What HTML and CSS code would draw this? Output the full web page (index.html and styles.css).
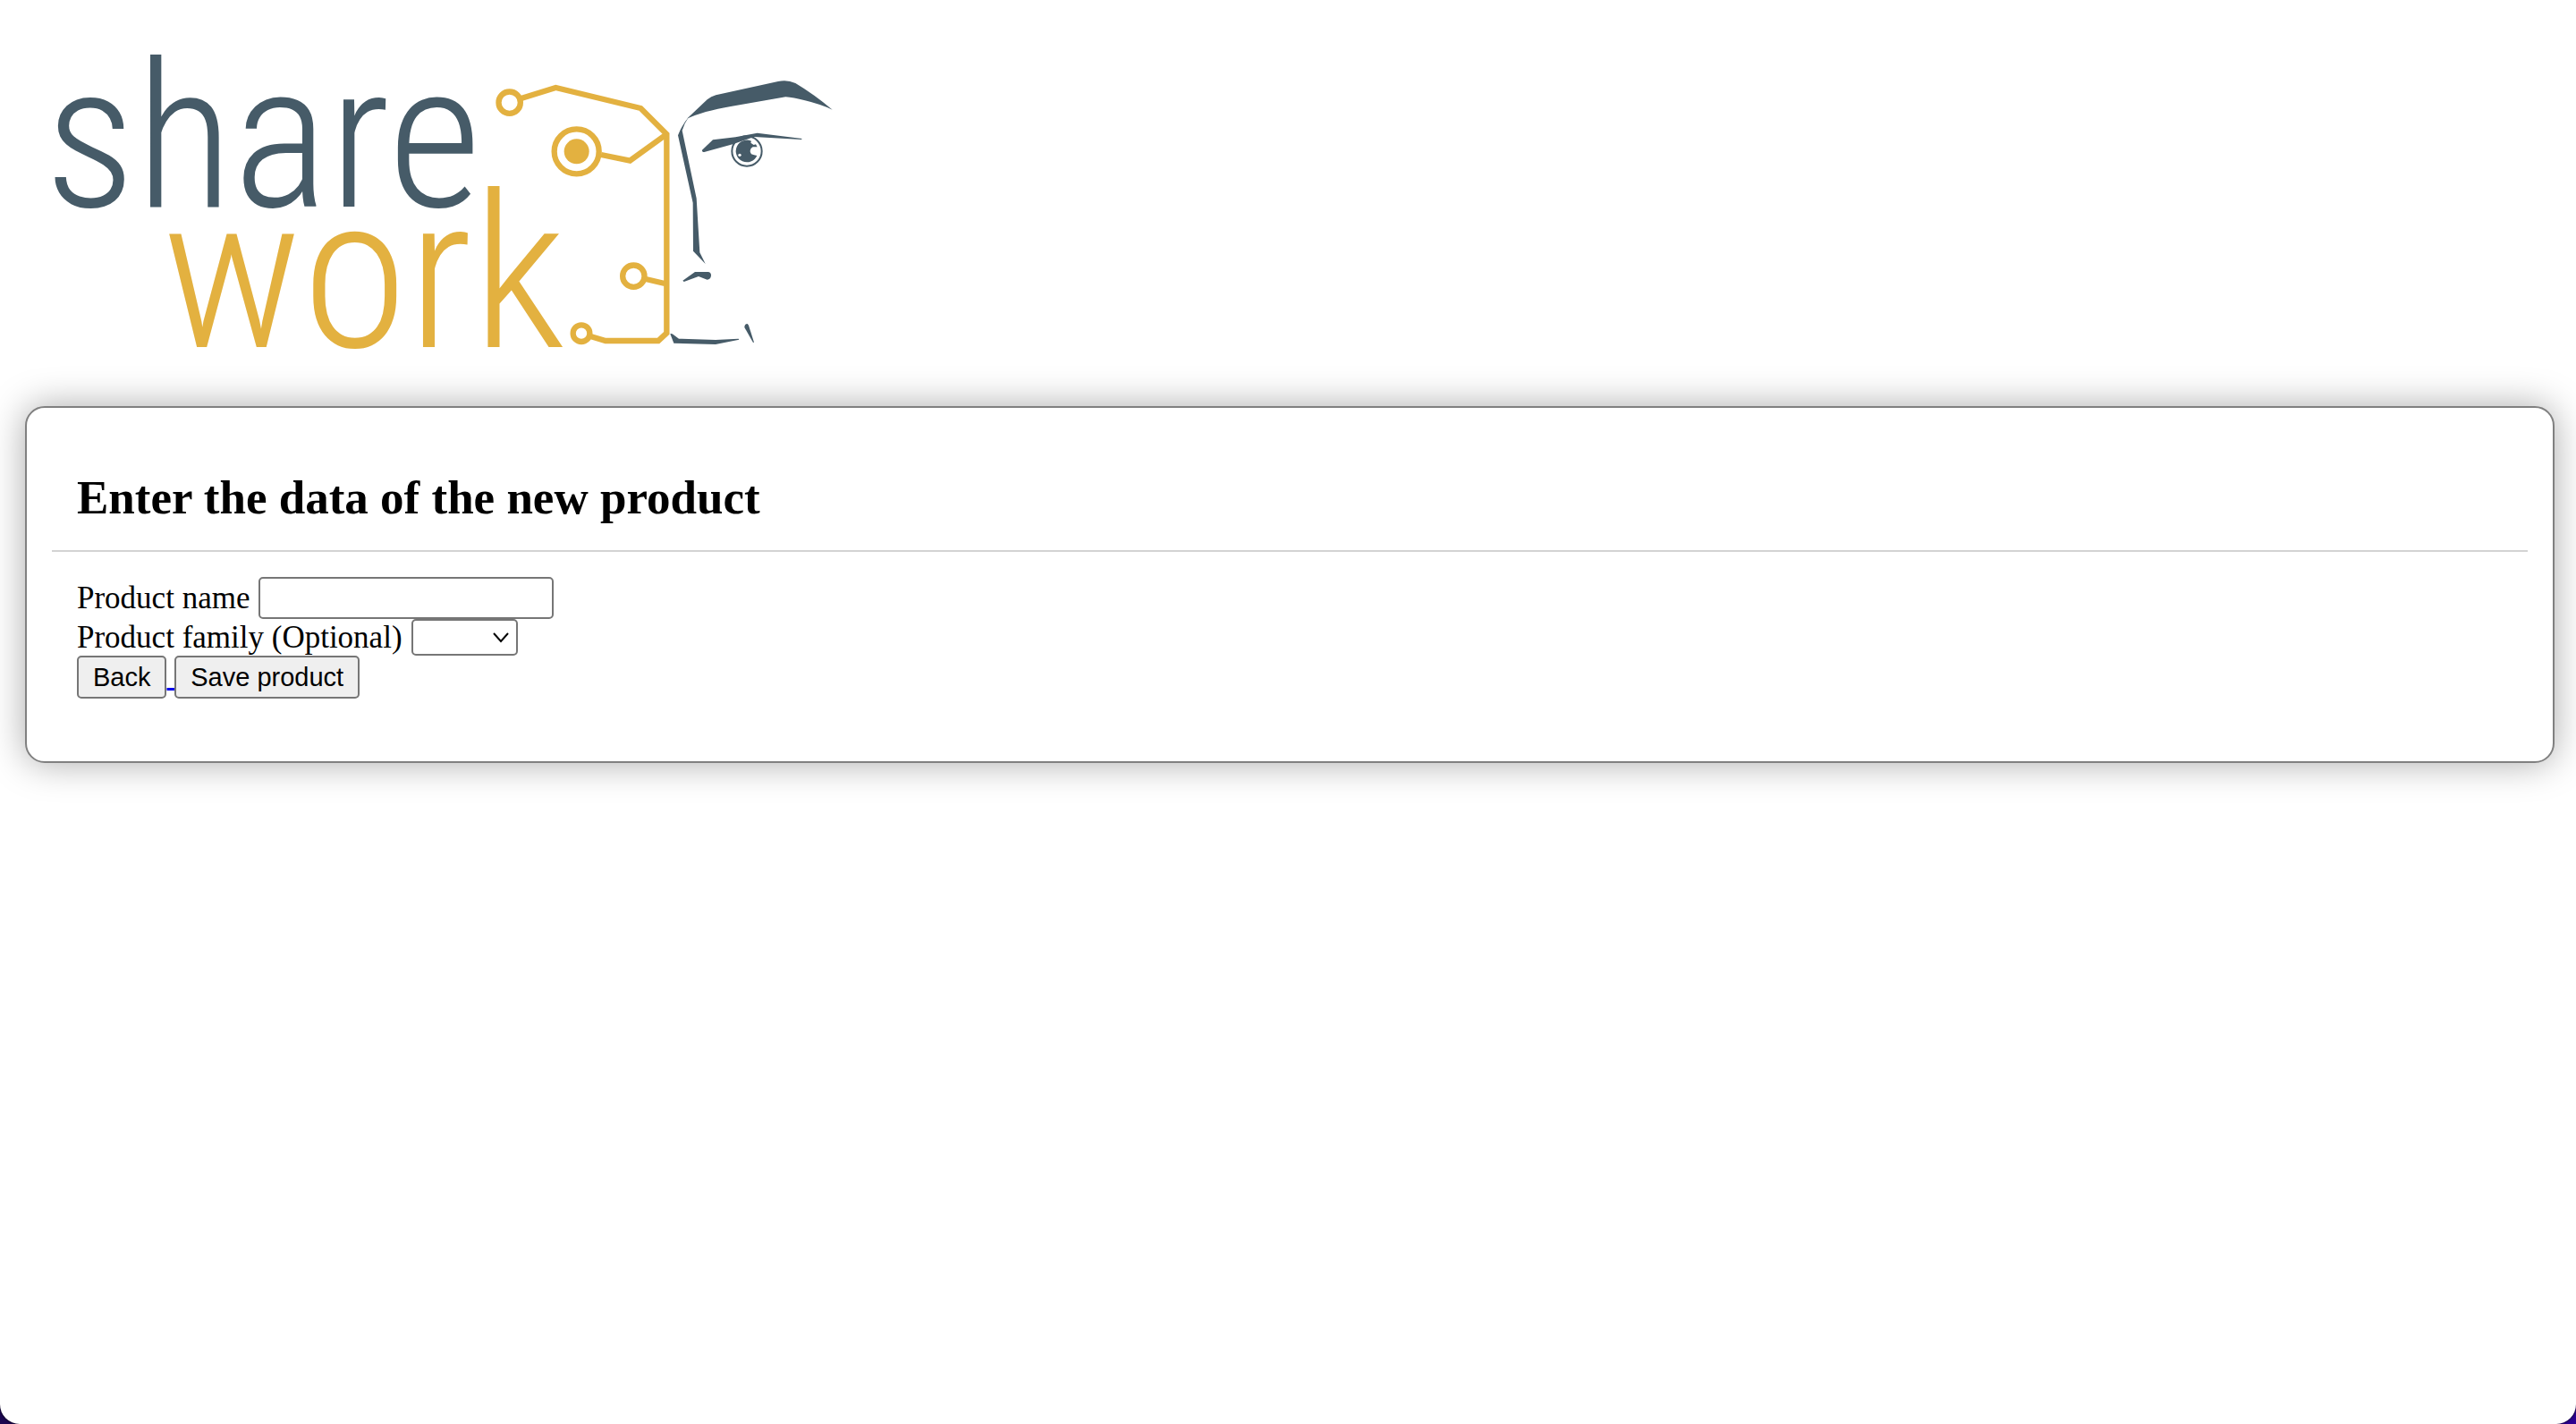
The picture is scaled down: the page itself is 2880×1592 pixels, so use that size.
FILE: index.html
```html
<!DOCTYPE html>
<html lang="en">
<head>
<meta charset="utf-8">
<title>Sharework</title>
<link rel="stylesheet" href="styles.css">
</head>
<body>
<div class="page">
  <header class="brand">
    <svg class="logo" viewBox="28 0 932 454" role="img" aria-label="share work">
      <text class="word word-share" x="50" y="231">share</text>
      <text class="word word-work" x="181" y="388">work</text>
      <g transform="translate(540 70) scale(.33333)">
        <g class="circuit">
          <circle cx="89" cy="134" r="36.500"/>
          <path d="M128 120 L244 84 L529 153 L616 240 V907 L588 933 H411 L363 919"/>
          <path d="M396 309 L493 329 L616 240"/>
          <circle cx="314" cy="298" r="75"/>
          <circle cx="505" cy="716" r="36.500"/>
          <path d="M546 726 L610 741"/>
          <circle cx="330" cy="908" r="28"/>
        </g>
        <circle class="gold" cx="314" cy="298" r="42"/>
        <g class="slate" transform="translate(540 0)">
          <path d="M144 188 L212 124 Q225 113 241 109 L450 63 Q480 56 508 69 Q570 106 632 158 Q590 139 540 127 Q500 117 475 115 L295 146 Q195 163 144 188Z"/>
          <path d="M150 183 Q135 203 128 228 L176 455 L187 637 L206 675 L165 632 L164 470 L114 244 Q128 207 150 183Z"/>
          <path d="M195 293 L231 259 L307 250 L380 236 L530 255 L528 258 L369 249 L300 273 L202 300 Q194 300 195 293Z"/>
          <circle class="iris" cx="345" cy="297" r="50"/>
          <path d="M360 263 A37 37 0 1 0 379 312 Q369 311 360 307 A15 15 0 0 1 365 283 L380 283 L375 274 L368 276 L358 269Z"/>
          <circle class="glint" cx="321" cy="310" r="5"/>
          <path d="M130 731 L171 702 H216 Q226 704 225 715 Q223 728 212 728 L183 717 L134 735Z"/>
          <path d="M88 910 Q92 907 97 911 L117 926 L240 930 L317 926 L319 929 L240 945 L100 941Z"/>
          <path d="M337 888 Q337 876 347 876 L351 881 L369 938 L366 939Z"/>
        </g>
      </g>
    </svg>
  </header>
  <main class="card">
    <h2 class="title">Enter the data of the new product</h2>
    <form class="form">
      <div class="row"><label for="name">Product name</label> <input class="field" id="name" type="text"></div>
      <div class="row"><label for="family">Product family (Optional)</label>
        <span class="picker"><select class="select" id="family"><option></option></select><svg class="chevron" viewBox="0 0 18 12" aria-hidden="true"><path d="M1 1 L9 10 L17 1"/></svg></span></div>
      <div class="row"><a class="back" href="#"><button class="button" type="button">Back</button> </a><button class="button" type="submit">Save product</button></div>
    </form>
  </main>
</div>
</body>
</html>
```
FILE: styles.css
```css
html {
  background: linear-gradient(90deg, #1c0750, #2b0090);
}

body {
  margin: 0;
  color: #000;
  font: 35px/41px "Liberation Serif", "Times New Roman", serif;
}

.page {
  box-sizing: border-box;
  min-height: 100vh;
  padding: 0 24px 56px 28px;
  background: #fff;
  border-radius: 0 0 22px 22px;
  box-shadow: 0 0 3px #000;
}

.logo {
  display: block;
  width: 932px;
  max-width: 100%;
}

.word {
  font-family: "Roboto Condensed", Roboto, sans-serif;
  font-weight: 300;
}

.word-share {
  font-size: 227px;
}

.word-work {
  font-size: 240px;
}

.word-share,
.slate {
  fill: #465b68;
}

.word-work,
.gold {
  fill: #e3b140;
}

.circuit {
  fill: none;
  stroke: #e3b140;
  stroke-width: 19;
}

.iris {
  fill: none;
  stroke: #465b68;
  stroke-width: 6;
}

.glint {
  fill: #fff;
}

.card {
  padding: 28px;
  border: 2px solid #808080;
  border-radius: 22px;
  background: #fff;
  box-shadow: 0 0 40px #aaa;
}

.title {
  margin: 0;
  padding: 42px 28px 28px;
  border-bottom: 2px solid #d3d3d3;
  font-size: 53px;
  line-height: 61px;
}

.form {
  padding: 28px 28px 42px;
}

.row {
  display: flex;
  align-items: center;
  gap: 10px;
}

.field,
.select,
.button {
  box-sizing: border-box;
  margin: 0;
  border: 2px solid #767676;
  border-radius: 5px;
  color: #000;
  font: 29px/34px "Liberation Sans", Arial, sans-serif;
}

.field {
  width: 330px;
  height: 47px;
  background: #fff;
}

.picker {
  display: grid;
  align-items: center;
}

.select {
  grid-area: 1 / 1;
  width: 119px;
  height: 41px;
  background: #fff;
  appearance: none;
}

.chevron {
  grid-area: 1 / 1;
  justify-self: end;
  width: 18px;
  margin-right: 10px;
  fill: none;
  stroke: #000;
  stroke-width: 2;
  pointer-events: none;
}

.row:last-child {
  display: block;
}

.button {
  height: 48px;
  padding: 0 16px;
  background: #efefef;
}

.back {
  color: #00e;
}
```
